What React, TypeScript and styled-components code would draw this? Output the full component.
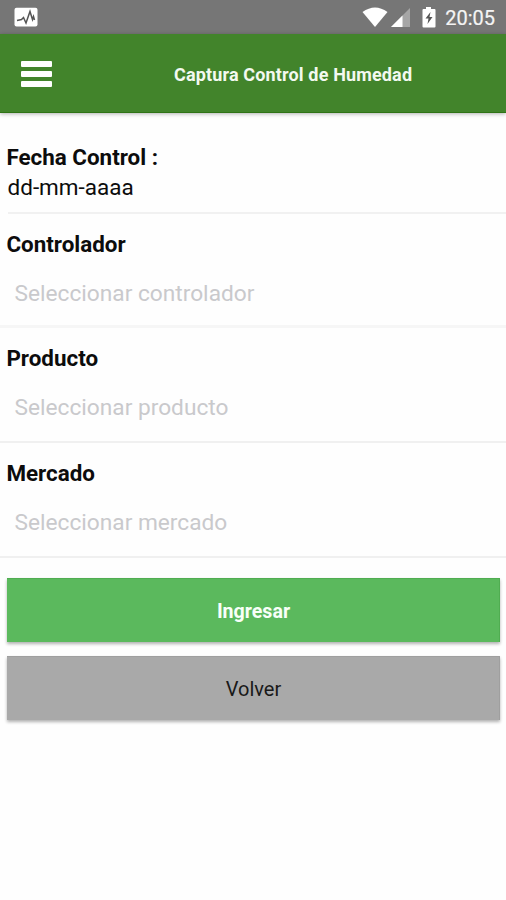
import React from "react";
import styled, { createGlobalStyle } from "styled-components";

const GlobalStyle = createGlobalStyle`
  * { box-sizing: border-box; }
  body { margin: 0; background: #fefefe; font-family: Roboto, sans-serif; color: #0c0c0c; }
`;

const Screen = styled.div`
  min-height: 900px;
  display: flex;
  flex-direction: column;
`;

const StatusBar = styled.div`
  height: 34px;
  padding: 0 11px 0 14px;
  display: flex;
  align-items: center;
  background: #767676;
`;

const StatusIcons = styled.div`
  margin-left: auto;
  display: flex;
  align-items: center;
`;

const Clock = styled.span`
  margin-left: 9px;
  padding-top: 1px;
  font-size: 20px;
  line-height: 24px;
  color: #f4f4f4;
  -webkit-text-stroke: 0.2px #f4f4f4;
`;

const Header = styled.header`
  height: 79px;
  padding: 1px 21px 0;
  display: grid;
  grid-template-columns: 31px 1fr;
  align-items: center;
  background: #42842b;
  border-bottom: 1px solid #2f7416;
  box-shadow: 0 1px 4px rgba(0, 0, 0, 0.3);
`;

const MenuButton = styled.button`
  margin-top: 1px;
  padding: 0;
  border: 0;
  background: none;
  display: grid;
  gap: 4px;
`;

const MenuLine = styled.span`
  height: 6.3px;
  border-radius: 1px;
  background: #fff;
`;

const Title = styled.h1`
  margin: 3px 0 0 122px;
  font-size: 18px;
  line-height: 24px;
  font-weight: 700;
  letter-spacing: 0.15px;
  white-space: nowrap;
  color: #f3f9f0;
`;

const Form = styled.form`
  padding-top: 29px;
  display: flex;
  flex-direction: column;
`;

const Field = styled.div<{ $line: string; $thickness: number; $inset?: boolean }>`
  height: ${(p) => (p.$inset ? 71.5 : 114.7)}px;
  padding-top: ${(p) => (p.$inset ? 0 : 15)}px;
  background: linear-gradient(${(p) => p.$line}, ${(p) => p.$line})
    ${(p) => (p.$inset ? 8 : 0)}px 100% / 100% ${(p) => p.$thickness}px no-repeat;
`;

const Label = styled.div`
  padding-left: 6.4px;
  font-size: 22.4px;
  line-height: 30px;
  font-weight: 700;
`;

const DateValue = styled.div`
  padding-left: 7.5px;
  font-size: 22.5px;
  line-height: 30px;
`;

const Placeholder = styled.div`
  padding: 20px 0 0 14.5px;
  font-size: 22.7px;
  line-height: 30px;
  color: #c9c9cc;
`;

const Actions = styled.div`
  padding: 20px 6px 0 7px;
  display: grid;
  gap: 14px;
`;

const Action = styled.button<{ $primary?: boolean }>`
  height: 64px;
  padding: ${(p) => (p.$primary ? 3 : 1)}px 0 0 1px;
  border: solid ${(p) => (p.$primary ? "#50ad51" : "#9f9f9f")};
  border-width: 1px 1px 0 0;
  background: ${(p) => (p.$primary ? "#5bb95d" : "#a9a9a9")};
  color: ${(p) => (p.$primary ? "#f8fff8" : "#191919")};
  font: ${(p) => (p.$primary ? "700 19.6px" : "400 20px")}/24px Roboto, sans-serif;
  box-shadow: 0 2px 3px rgba(0, 0, 0, 0.3);
`;

const fields = [
  { label: "Controlador", hint: "Seleccionar controlador", line: "#f6f6f6", thickness: 3 },
  { label: "Producto", hint: "Seleccionar producto", line: "#f0f0f0", thickness: 2 },
  { label: "Mercado", hint: "Seleccionar mercado", line: "#f0f0f0", thickness: 2 },
];

export default function App() {
  return (
    <Screen>
      <GlobalStyle />
      <StatusBar>
        <svg width="24" height="20" viewBox="0 0 24 20">
          <rect x="0.5" y="0.8" width="23" height="18.7" rx="2" fill="#fff" />
          <path d="M3 13.5L7.5 12.5L9.5 10.5L12 16L16 4.5L18.5 12.5L19.5 9.5L20.5 13" fill="none" stroke="#555" strokeWidth="1.5" />
        </svg>
        <StatusIcons>
          <svg width="74" height="22" viewBox="0 0 74 22">
            <path d="M0.5 6Q13 -3 25.5 6L13 21Z" fill="#fff" />
            <path d="M29 21L48 2V21Z" fill="#a6a6a6" />
            <path d="M29 21L40.5 9.5V21Z" fill="#fff" />
            <path d="M64 1h5v2h3.5q1 0 1 1v16.5q0 1-1 1h-11q-1 0-1-1V4q0-1 1-1H64z" fill="#fff" />
            <path d="M68.5 6L63.5 12.5H66.5L65.5 18L70.5 11H67.5Z" fill="#555" />
          </svg>
          <Clock>20:05</Clock>
        </StatusIcons>
      </StatusBar>
      <Header>
        <MenuButton aria-label="Menú">
          <MenuLine />
          <MenuLine />
          <MenuLine />
        </MenuButton>
        <Title>Captura Control de Humedad</Title>
      </Header>
      <Form>
        <Field $line="#f1f1f1" $thickness={2} $inset>
          <Label>Fecha Control :</Label>
          <DateValue>dd-mm-aaaa</DateValue>
        </Field>
        {fields.map((f) => (
          <Field key={f.label} $line={f.line} $thickness={f.thickness}>
            <Label>{f.label}</Label>
            <Placeholder>{f.hint}</Placeholder>
          </Field>
        ))}
        <Actions>
          <Action type="button" $primary>Ingresar</Action>
          <Action type="button">Volver</Action>
        </Actions>
      </Form>
    </Screen>
  );
}
